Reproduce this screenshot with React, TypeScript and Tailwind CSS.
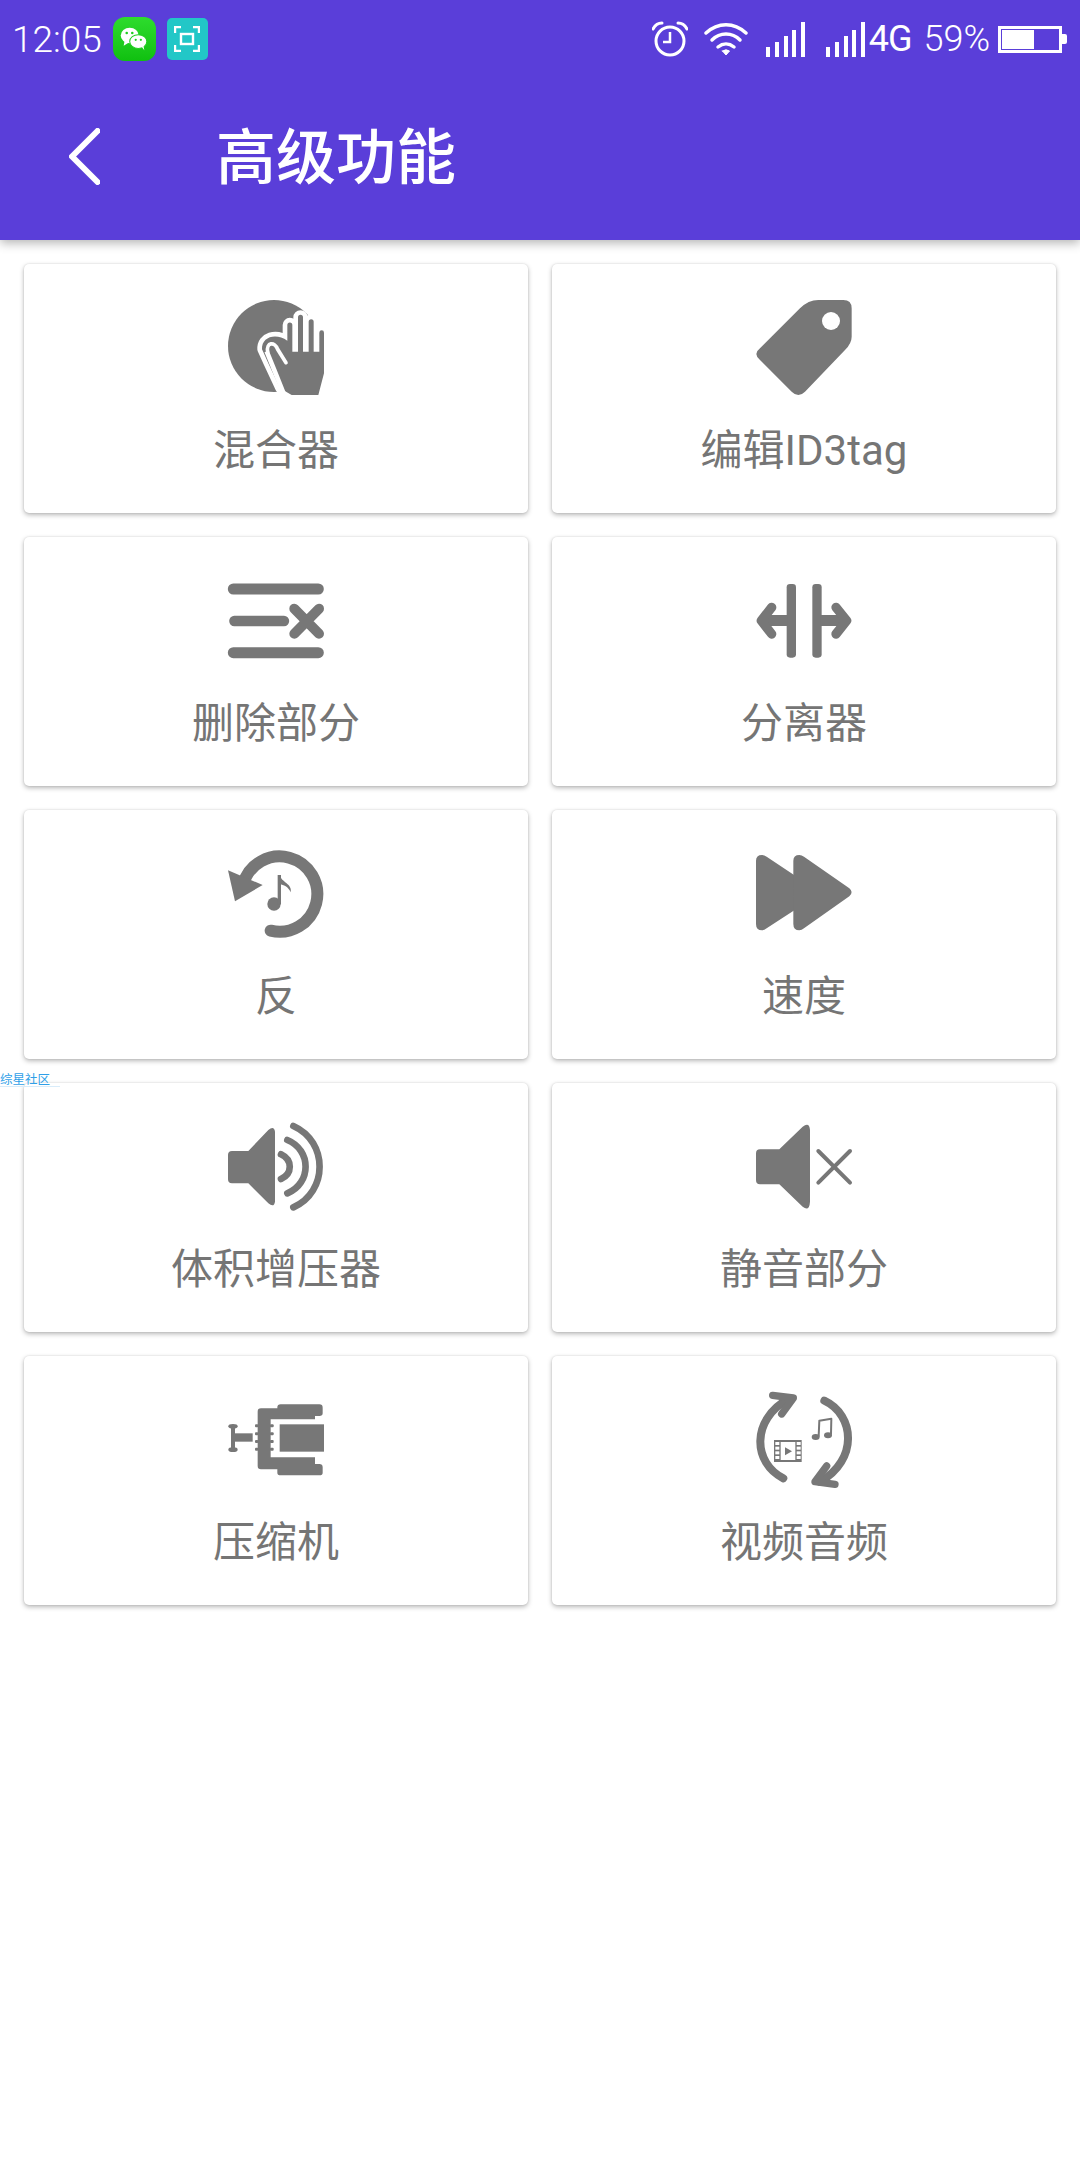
const GRAY = '#777777'

function Icon({ box, children }: { box: string; children: React.ReactNode }) {
  return (
    <svg viewBox={`${box} 288 288`} className="h-[96px] w-[96px] overflow-visible" fill={GRAY}>
      {children}
    </svg>
  )
}

const HAND =
  'M186 208C184 170 228 158 262 182V135a7.5 7.5 0 0 1 15 0V215H294V112a7.5 7.5 0 0 1 15 0V215H326V125a7.5 7.5 0 0 1 15 0V215H358V158a7 7 0 0 1 14 0V280L355 345H275L240 325L205 250Z'

const HandIcon = () => (
  <Icon box="84 60">
    <circle cx="222" cy="198" r="138" />
    {/* white cut-out round the hand */}
    <path d={HAND} fill="#fff" stroke="#fff" strokeWidth="28" strokeLinejoin="round" />
    <path d="M262 135L294 112L326 125L358 158V215H262Z" fill="#fff" />
    <path d={HAND} />
    <path d="M203 216C198 186 224 184 233 208L258 248" fill="none" stroke="#fff" strokeWidth="11" strokeLinecap="round" />
    <path d="M200 214L222 268L254 348" fill="none" stroke="#fff" strokeWidth="14" />
  </Icon>
)

const TagIcon = () => (
  <Icon box="78 60">
    <path d="M210 85Q235 60 265 60H340Q365 60 365 85V170Q365 190 345 210L225 335Q205 355 185 335L90 240Q68 222 90 205Z" />
    <circle cx="303" cy="123" r="27" fill="#fff" />
  </Icon>
)

const DeleteIcon = () => (
  <Icon box="84 39">
    <g fill="none" stroke={GRAY} strokeLinecap="round">
      <path d="M100 87H355" strokeWidth="33" />
      <path d="M103 183H252" strokeWidth="31" />
      <path d="M100 278H355" strokeWidth="33" />
      <path d="M283 146L357 221M357 146L283 221" strokeWidth="30" />
    </g>
  </Icon>
)

const SplitIcon = () => (
  <Icon box="78 39">
    <rect x="170" y="72" width="28" height="221" rx="10" />
    <rect x="247" y="72" width="28" height="221" rx="10" />
    <rect x="100" y="165" width="72" height="33" />
    <rect x="272" y="165" width="72" height="33" />
    <g fill="none" stroke={GRAY} strokeWidth="28" strokeLinecap="round" strokeLinejoin="round">
      <path d="M125 142L94 182L125 222" />
      <path d="M318 142L350 182L318 222" />
    </g>
  </Icon>
)

const ReverseIcon = () => (
  <Icon box="84 51">
    <path d="M212 305A113 113 0 1 0 130 165" fill="none" stroke={GRAY} strokeWidth="36" strokeLinecap="round" />
    <path d="M84 124L188 168L105 217Z" />
    <circle cx="222" cy="225" r="20" />
    <rect x="233" y="138" width="10" height="88" />
    <path d="M238 138C245 160 278 165 272 190C265 172 250 168 240 165Z" />
  </Icon>
)

const ForwardIcon = () => (
  <Icon box="78 51">
    <path d="M78 95Q78 78 96 78Q103 78 110 83L200 143V239L110 298Q103 304 96 304Q78 304 78 285Z" />
    <path d="M190 95Q190 78 208 78Q215 78 222 83L358 178Q372 190 358 202L222 298Q215 304 208 304Q190 304 190 285Z" />
  </Icon>
)

const BoostIcon = () => (
  <Icon box="84 57">
    <path d="M84 165Q84 153 96 153H145L205 90Q222 76 225 95V305Q222 324 205 310L145 250H96Q84 250 84 238Z" />
    <g fill="none" stroke={GRAY} strokeWidth="20" strokeLinecap="round">
      <path d="M243 163C278 180 278 220 243 237" />
      <path d="M262 120C335 150 335 250 262 280" />
      <path d="M280 78C385 125 385 275 280 322" />
    </g>
  </Icon>
)

const MuteIcon = () => (
  <Icon box="78 57">
    <path d="M78 160Q78 148 90 148H148L218 80Q238 64 240 90V305Q238 336 218 320L148 253H90Q78 253 78 240Z" />
    <path d="M265 153L360 248M360 153L265 248" fill="none" stroke={GRAY} strokeWidth="12" strokeLinecap="round" />
  </Icon>
)

const CompressIcon = () => (
  <Icon box="84 66">
    <ellipse cx="99" cy="169" rx="14" ry="7" />
    <ellipse cx="99" cy="239" rx="14" ry="7" />
    <rect x="93" y="170" width="12" height="70" />
    <rect x="105" y="190" width="53" height="25" />
    <path d="M173 125Q173 115 183 115H232V112Q232 103 242 103H358Q368 103 368 113V130Q368 138 358 138H345V148H212V262H345V282H358Q368 282 368 292V308Q368 316 358 316H242Q232 316 232 308V298H183Q173 298 173 288Z" />
    {[163, 187, 210, 233].map((y) => (
      <g key={y}>
        <rect x="165" y={y} width="10" height="9" rx="3" />
        <rect x="210" y={y} width="11" height="9" rx="3" />
      </g>
    ))}
    <rect x="239" y="163" width="133" height="82" />
  </Icon>
)

const ConvertIcon = () => (
  <Icon box="78 66">
    <g fill="none" stroke={GRAY} strokeLinecap="round" strokeLinejoin="round">
      <path d="M160 325C70 280 60 150 178 85" strokeWidth="24" />
      <path d="M128 76L190 84L155 132" strokeWidth="22" />
      <path d="M283 92C375 135 385 270 270 335" strokeWidth="24" />
      <path d="M315 343L255 335L290 288" strokeWidth="22" />
      <path d="M266 198L268 152L304 146L303 192" strokeWidth="6" />
    </g>
    <ellipse cx="257" cy="201" rx="12" ry="9" />
    <ellipse cx="294" cy="196" rx="12" ry="9" />
    <rect x="132" y="210" width="83" height="66" />
    <rect x="152" y="216" width="44" height="54" fill="#fff" />
    {[216, 230, 244, 258].map((y) => (
      <g key={y} fill="#fff">
        <rect x="136" y={y} width="12" height="9" />
        <rect x="200" y={y} width="12" height="9" />
      </g>
    ))}
    <path d="M165 232L186 244L165 256Z" />
  </Icon>
)

const items = [
  { label: '混合器', icon: <HandIcon /> },
  { label: '编辑ID3tag', icon: <TagIcon /> },
  { label: '删除部分', icon: <DeleteIcon /> },
  { label: '分离器', icon: <SplitIcon /> },
  { label: '反', icon: <ReverseIcon /> },
  { label: '速度', icon: <ForwardIcon /> },
  { label: '体积增压器', icon: <BoostIcon /> },
  { label: '静音部分', icon: <MuteIcon /> },
  { label: '压缩机', icon: <CompressIcon /> },
  { label: '视频音频', icon: <ConvertIcon /> },
]

function SignalBars() {
  return (
    <svg viewBox="0 0 39 35" className="h-[35px] w-[39px]" fill="#fff">
      <rect x="0" y="25" width="4" height="10" />
      <rect x="9" y="20" width="4" height="15" />
      <rect x="18" y="14" width="4" height="21" />
      <rect x="26" y="8" width="4" height="27" />
      <rect x="35" y="0" width="4" height="35" />
    </svg>
  )
}

function StatusBar() {
  return (
    <div className="flex h-[78px] items-center pl-[12px] pr-[13px] text-white">
      <span className="font-['Roboto',sans-serif] text-[37px] font-light leading-none">12:05</span>
      <div className="ml-[11px] flex h-[44px] w-[43px] items-center justify-center rounded-[12px] bg-gradient-to-b from-[#2ddc2d] to-[#0fc00f]">
        <svg viewBox="0 0 32 28" className="h-[24px] w-[30px]" fill="#fff">
          <ellipse cx="11" cy="10" rx="10.5" ry="9" />
          <path d="M5 16L4 22L10 18Z" />
          <ellipse cx="21" cy="17" rx="10" ry="8" stroke="#1fce1f" strokeWidth="1.2" />
          <path d="M25 23L28 27L27 22Z" />
          <circle cx="7.5" cy="7" r="1.5" fill="#1fce1f" />
          <circle cx="14" cy="7" r="1.5" fill="#1fce1f" />
          <circle cx="18" cy="15" r="1.3" fill="#1fce1f" />
          <circle cx="24" cy="15" r="1.3" fill="#1fce1f" />
        </svg>
      </div>
      <div className="ml-[11px] flex h-[42px] w-[41px] items-center justify-center rounded-[5px] bg-[#22c7c7]">
        <svg viewBox="0 0 26 26" className="h-[26px] w-[26px]" fill="none" stroke="#fff" strokeWidth="2.4">
          <path d="M1 7V1H7M19 1H25V7M25 19V25H19M7 25H1V19" />
          <rect x="7" y="8" width="12" height="10" />
        </svg>
      </div>
      <div className="ml-auto flex items-center">
        <svg viewBox="0 0 36 36" className="h-[36px] w-[36px]" fill="none" stroke="#fff" strokeWidth="3">
          <circle cx="18" cy="20" r="14" />
          <path d="M18 11V21H11" strokeWidth="2.5" />
          <path d="M1 8C3 4 6 2 10 2M26 2C30 2 33 4 35 8" strokeWidth="3" strokeLinecap="round" />
        </svg>
        <svg viewBox="0 0 44 34" className="ml-[16px] h-[34px] w-[44px]" fill="none" stroke="#fff" strokeWidth="3.5" strokeLinecap="round">
          <path d="M2 11C14 0 30 0 42 11" />
          <path d="M8 18C16 10 28 10 36 18" />
          <path d="M14 25C19 21 25 21 30 25" />
          <path d="M18.5 29L22 33L25.5 29Q22 26.5 18.5 29Z" fill="#fff" strokeWidth="1" />
        </svg>
        <div className="ml-[18px]"><SignalBars /></div>
        <div className="ml-[21px]"><SignalBars /></div>
        <span className="ml-[4px] font-['Roboto',sans-serif] text-[36px] font-normal leading-none tracking-[-1px]">4G</span>
        <span className="ml-[12px] font-['Roboto',sans-serif] text-[36px] font-light leading-none">59%</span>
        <div className="ml-[8px] flex items-center">
          <div className="h-[27px] w-[64px] border-[3px] border-white p-[1px]">
            <div className="h-full w-[32px] bg-white" />
          </div>
          <div className="h-[10px] w-[5px] rounded-r-[2px] bg-white" />
        </div>
      </div>
    </div>
  )
}

export default function App() {
  return (
    <div className="relative min-h-[2160px] bg-white font-['Roboto','Noto_Sans_CJK_SC',sans-serif]">
      <header className="h-[240px] bg-[#5a3ed9] shadow-[0_3px_10px_rgba(0,0,0,0.3)]">
        <StatusBar />
        <div className="flex h-[156px] items-center pb-[6px] pl-[69px]">
          <svg viewBox="0 0 31 57" className="mt-[6px] h-[57px] w-[31px]" fill="none" stroke="#fff" strokeWidth="6" strokeLinecap="round" strokeLinejoin="round">
            <path d="M28.5 3L3 28.5L28.5 54" />
          </svg>
          <h1 className="ml-[116px] font-['Noto_Sans_CJK_SC',sans-serif] text-[60px] font-medium leading-none text-white">高级功能</h1>
        </div>
      </header>

      <main className="grid grid-cols-2 gap-[24px] px-[24px] pt-[24px]">
        {items.map((item) => (
          <div
            key={item.label}
            className="flex h-[249px] flex-col items-center rounded-[5px] bg-white pt-[36px] shadow-[0_2px_5px_rgba(0,0,0,0.28),0_0_2px_rgba(0,0,0,0.12)]"
          >
            {item.icon}
            <span className="mt-[27px] text-[42px] leading-[56px] text-[#757575]">{item.label}</span>
          </div>
        ))}
      </main>

      {/* forum watermark lying over the page */}
      <div className="absolute left-0 top-[1072px] w-[60px] border-b border-[#d8ecfa] text-[12.5px] leading-[14px] text-[#2f9fe8] font-['Noto_Sans_CJK_SC',sans-serif]">
        综星社区
      </div>
    </div>
  )
}
